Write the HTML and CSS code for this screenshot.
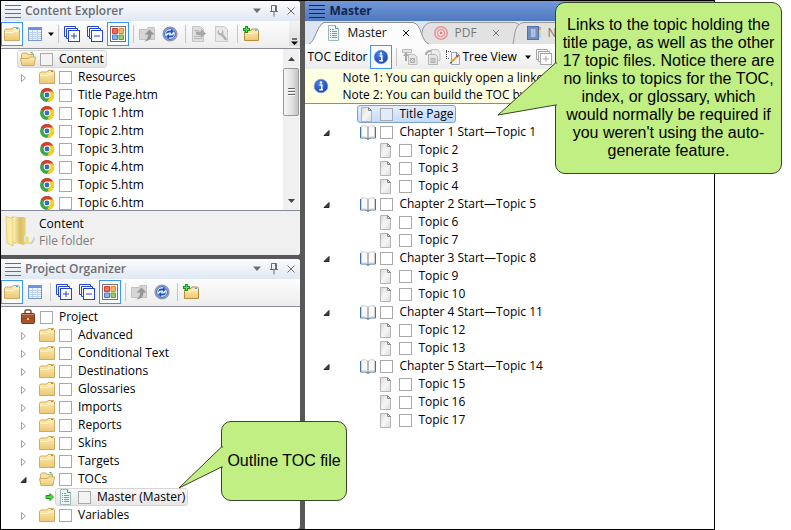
FILE: index.html
```html
<!DOCTYPE html>
<html lang="en">
<head>
<meta charset="utf-8">
<title>Master</title>
<link rel="stylesheet" href="styles.css">
</head>
<body>
<svg class="sprite" aria-hidden="true">
  <defs>
    <linearGradient id="g-folder" x1="0" y1="0" x2="0" y2="1"><stop offset="0" stop-color="#fdeeb4"/><stop offset="1" stop-color="#ecc875"/></linearGradient>
    <linearGradient id="g-page" x1="0" y1="0" x2="1" y2="1"><stop offset="0" stop-color="#d9d9d9"/><stop offset=".5" stop-color="#f6f6f6"/><stop offset="1" stop-color="#dcdcdc"/></linearGradient>
    <linearGradient id="g-big" x1="0" y1="0" x2="1" y2="0"><stop offset="0" stop-color="#f9edb0"/><stop offset=".4" stop-color="#d9bd62"/><stop offset="1" stop-color="#f5e486"/></linearGradient>
    <radialGradient id="g-info" cx=".4" cy=".3" r=".8"><stop offset="0" stop-color="#4f83ea"/><stop offset="1" stop-color="#1238a8"/></radialGradient>
  </defs>
  <symbol id="folder" viewBox="0 0 16 16">
    <path d="M.5 4.500 1.500 3H8l1-1.500h5.500l1 1.500V14.500H.5z" fill="url(#g-folder)" stroke="#d0aa60"/>
    <path d="M1 6.500h8l1-1.500h5" fill="none" stroke="#fff6d2"/>
    <path d="M10 2.500h3" stroke="#fff"/><path d="M12 2.500h2" stroke="#35a7e0"/>
  </symbol>
  <symbol id="folder-open" viewBox="0 0 16 16">
    <path d="M1.500 13V3.500L2.500 2H7l1 1.500h5.500V7" fill="#f7e2a0" stroke="#d0aa60"/>
    <path d="M.5 7.500h8l1-1.500h6l-1.500 8.500h-12z" fill="url(#g-folder)" stroke="#d0aa60"/>
    <path d="M8.500 2h4" stroke="#fff"/><path d="M10.500 1.500h2" stroke="#2bb54a"/><path d="M11.500 3h2" stroke="#35a7e0"/>
  </symbol>
  <symbol id="folder-add" viewBox="0 0 16 16">
    <path d="M1.500 6 3 4.500h5L9 3h5.500l1 1.500v10h-14z" fill="url(#g-folder)" stroke="#b98c3c"/>
    <path d="M2 7.500h7l1-1.500h5" fill="none" stroke="#fff6d2"/><path d="M12 4.500h2" stroke="#35a7e0"/>
    <path d="M3.500 0v7M0 3.500h7" stroke="#109a24" stroke-width="3"/><path d="M3.500 1v5M1 3.500h5" stroke="#5fe065"/>
  </symbol>
  <symbol id="chrome" viewBox="0 0 16 16">
    <circle cx="8" cy="8" r="7" fill="#3aa648"/>
    <path d="M8 8 1.900 4.500A7 7 0 0 1 14.100 4.500z" fill="#dc3a2d"/>
    <path d="M8 4.500h6.100A7 7 0 0 1 8 15L11 9.500z" fill="#f9cf1c"/>
    <circle cx="8" cy="8" r="3.400" fill="#fff"/><circle cx="8" cy="8" r="2.400" fill="#2f6fc4"/>
  </symbol>
  <symbol id="page" viewBox="0 0 16 16">
    <path d="M1.500 1.500h7l3 3v11h-10z" fill="url(#g-page)" stroke="#b4b4b4"/><path d="M8.500 1.500v3h3z" fill="#f4f4f4" stroke="#858585"/>
  </symbol>
  <symbol id="toc" viewBox="0 0 16 16">
    <path d="M2.500.500h7l3 3v12h-10z" fill="#edf6f6" stroke="#9db8b8"/><path d="M9.500.500v3h3" fill="#fff" stroke="#6f8c8c"/>
    <path d="M4 4.500h1m1 0h2M4 6.500h1m1 0h5M4 8.500h1m1 0h5M4 10.500h1m1 0h5M4 12.500h1m1 0h5" stroke="#7d9c9c"/>
  </symbol>
  <symbol id="book" viewBox="0 0 16 16">
    <path d="M.5 3v11h6M15.500 3v11h-6" fill="none" stroke="#3f73ad"/>
    <path d="M1.500 2q4.500-1 6.500 1v11q-2-1.500-6.500-1zM14.500 2q-4.500-1-6.500 1v11q2-1.500 6.500-1z" fill="#fafafa" stroke="#cfcfcf"/>
    <path d="M8 3v11" stroke="#9a9a9a"/><path d="M6.500 14.500 8 15.200l1.500-.700" fill="none" stroke="#333"/>
  </symbol>
  <symbol id="briefcase" viewBox="0 0 16 16">
    <path d="M5 4V2.500Q5 1 6.500 1h3Q11 1 11 2.500V4" fill="none" stroke="#7b4a35" stroke-width="1.500"/>
    <rect x="1.500" y="4.500" width="13" height="10" rx="1" fill="#a5562c" stroke="#793719"/>
    <path d="M2 5.500h12" stroke="#c9805a"/><path d="M2 9.500h12" stroke="#8a4420"/><rect x="7" y="9" width="2" height="2" fill="#e7c27c"/>
  </symbol>
  <symbol id="table" viewBox="0 0 16 16">
    <rect x="1.500" y="1.500" width="13" height="13" fill="#f2f7ff" stroke="#7396d8"/><path d="M2 3h12" stroke="#6a92e0" stroke-width="2"/>
    <path d="M2 6.500h12M2 8.500h12M2 10.500h12M2 12.500h12M5.500 4v10M10.500 4v10" stroke="#bdd0f2"/>
  </symbol>
  <symbol id="expand" viewBox="0 0 16 16">
    <path d="M11.500 2V.500H.5v10H2M13.500 4V2.500h-11v10H4" fill="none" stroke="currentColor"/>
    <rect x="4.500" y="4.500" width="11" height="11" fill="#fff" stroke="currentColor"/><path d="M7 10h6M10 7v6" stroke="currentColor"/>
  </symbol>
  <symbol id="collapse" viewBox="0 0 16 16">
    <path d="M11.500 2V.500H.5v10H2M13.500 4V2.500h-11v10H4" fill="none" stroke="currentColor"/>
    <rect x="4.500" y="4.500" width="11" height="11" fill="#fff" stroke="currentColor"/><path d="M7 10h6" stroke="currentColor"/>
  </symbol>
  <symbol id="squares" viewBox="0 0 16 16">
    <rect x=".5" y=".5" width="15" height="15" fill="#fff" stroke="#77716c"/>
    <path d="M2.500 2.500h5v5h-5z" fill="#ef6a5c" stroke="#d93a31"/><path d="M9 2.500h4.500v5H9z" fill="#f8b45e" stroke="#e4872a"/>
    <path d="M2.500 9h5v4.500h-5z" fill="#87b2f0" stroke="#4a79cb"/><path d="M9 9h4.500v4.500H9z" fill="#9ace62" stroke="#619f33"/>
  </symbol>
  <symbol id="upload" viewBox="0 0 16 16">
    <path d="M.5 3.500H8l1-2h6.500v12H.5z" fill="#d6d6d6" stroke="#c2c2c2"/>
    <path d="M4 15.500q5-1 5-7H5.500L10.500 3.500l5 5H12.500q0 7-8.500 7z" fill="#969696"/>
  </symbol>
  <symbol id="refresh" viewBox="0 0 16 16">
    <circle cx="8" cy="8" r="6.800" fill="#c5d7f8" stroke="#8e98ae" stroke-width="1.600"/><circle cx="8" cy="8" r="5.400" fill="#dfeaff" stroke="#3462c8"/>
    <path d="M4 8q0-3.500 4-3.500h1V3l3 2.500L9 8V6.500H7Q5 6.500 4 8zM12 8q0 3.500-4 3.500H7V13l-3-2.500L7 8v1.500h2q2 0 3-1.500z" fill="#2152bf"/>
  </symbol>
  <symbol id="page-arrow" viewBox="0 0 16 16">
    <path d="M1.500.500h8l3 3v12h-11z" fill="#dedede" stroke="#c4c4c4"/><path d="M3 4.500h5M3 10.500h7M3 12.500h8" stroke="#bbb"/><path d="M5 5.500h5V3l5 4.500-5 4.500V9.500q-3 0-5-1z" fill="#a8a8a8"/>
  </symbol>
  <symbol id="page-wrench" viewBox="0 0 16 16">
    <path d="M1.500.500h9l3 3v12h-12z" fill="#e8e8e8" stroke="#cacaca"/><path d="m7.500 8 4 5" stroke="#b0b0b0" stroke-width="2.500" stroke-linecap="round"/><path d="M5 4v2.500l1.500 1 1.500-1V4q2 1 1.500 3T7 9.500 3.800 7.500 5 4z" fill="#b4b4b4"/>
  </symbol>
  <symbol id="info" viewBox="0 0 16 16">
    <circle cx="8" cy="8" r="6.800" fill="url(#g-info)" stroke="#7494d8" stroke-width=".6"/><circle cx="8" cy="4.500" r="1.200" fill="#fff"/><path d="M6.500 7h2.300v4.500M6.200 11.800h3.900" stroke="#fff" stroke-width="1.500" fill="none"/>
  </symbol>
  <symbol id="pages-up" viewBox="0 0 16 16">
    <path d="M.5.500h9v3h-9zM6.500 5.500h6l2.500 2.500v7.500H6.500z" fill="#e6e6e6" stroke="#bcbcbc"/><path d="M3 12V7H1l3-4 3 4H5v5z" fill="#a8a8a8"/><path d="M8.500 9.500h4v4h-4zm0 0 4 4m0-4-4 4" fill="none" stroke="#b0b0b0"/>
  </symbol>
  <symbol id="pages-two" viewBox="0 0 16 16">
    <path d="M6.500.500h6l2.500 3v8H6.500z" fill="#ececec" stroke="#c0c0c0"/><path d="M3.500 5.500h7l2 2v8h-9z" fill="#e6e6e6" stroke="#b4b4b4"/><path d="M1 6q0-4 5-4" fill="none" stroke="#a8a8a8" stroke-width="2"/><path d="M6 9.500h4v4H6zm0 0 4 4m0-4-4 4" fill="none" stroke="#b0b0b0"/>
  </symbol>
  <symbol id="tree-edit" viewBox="0 0 16 16">
    <path d="M1.500 1v10M1 2.500h5M1 9.500h4" fill="none" stroke="#555" stroke-dasharray="1 1"/><path d="M6.500 3.500h5l3 3v9h-8z" fill="#f2f6fa" stroke="#9aa7b4"/><path d="M11.500 3.500v3h3" fill="none" stroke="#7d8c9b"/>
    <path d="m6.500 13 5-5" stroke="#e4a323" stroke-width="2"/><path d="m11.500 8 1.500-1.500" stroke="#cf3131" stroke-width="2"/><path d="m4.500 15 1.500-2.500 1 1z" fill="#333"/>
  </symbol>
  <symbol id="target" viewBox="0 0 16 16">
    <circle cx="8" cy="8" r="6.200" fill="#f6dcdc" stroke="#e29a9a" stroke-width="1.600"/><circle cx="8" cy="8" r="3.500" fill="#fbeeee" stroke="#e29a9a" stroke-width="1.500"/><circle cx="8" cy="8" r="1.400" fill="#dd7f7f"/>
  </symbol>
  <symbol id="notebook" viewBox="0 0 16 16">
    <path d="M12 2h3v3h-3z" fill="#ef9b94"/><path d="M12 5h3v4h-3z" fill="#f3cf7b"/><path d="M12 9h3v4h-3z" fill="#a8d6ed"/>
    <rect x="1.500" y="1.500" width="11" height="13" fill="#6f8fc4" stroke="#56719f"/><rect x="4.500" y="3.500" width="5.500" height="9" fill="#aebfdf" stroke="#7d93bf"/>
  </symbol>
  <symbol id="bars" viewBox="0 0 16 16"><path d="M0 2.500h16M0 6.500h16M0 10.500h16M0 14.500h16" stroke="currentColor"/></symbol>
  <symbol id="caret" viewBox="0 0 7 16"><path d="M1 6.500h6L4 10z" fill="currentColor"/></symbol>
  <symbol id="down" viewBox="0 0 16 16"><path d="M4 5.500h8L8 10z" fill="currentColor"/></symbol>
  <symbol id="pin" viewBox="0 0 16 16"><path d="M5.500 8.500v-6h5v6M4 8.500h8M8 9v4.500" fill="none" stroke="currentColor"/><path d="M9.500 3v5" stroke="currentColor"/></symbol>
  <symbol id="close" viewBox="0 0 16 16"><path d="m4.500 4.500 7 7m0-7-7 7" stroke="currentColor" fill="none"/></symbol>
  <symbol id="close-small" viewBox="0 0 16 16"><path d="m5 5 6 6m0-6-6 6" stroke="currentColor" fill="none"/></symbol>
  <symbol id="more" viewBox="0 0 8 8"><path d="M1 1h5" stroke="#000"/><path d="M0 3.500h7L3.500 7z" fill="#000"/></symbol>
  <symbol id="closed" viewBox="0 0 8 10"><path d="M1.500 1.500v7l4-3.500z" fill="#fff" stroke="#a0a0a0"/></symbol>
  <symbol id="opened" viewBox="0 0 8 10"><path d="M6 2.500v5H1z" fill="#404040" stroke="#262626"/></symbol>
  <symbol id="go" viewBox="0 0 10 10"><path d="M1 3.500h4V1.500L8.500 5 5 8.500V6.500H1z" fill="#4cdc3d" stroke="#1c9420"/></symbol>
  <symbol id="folder-big" viewBox="0 0 32 32">
    <path d="M20 29q8-1 9-8 3 3-2 8z" fill="#d0d0d0"/><path d="M7 2 20 3v24L9 28z" fill="#f3df92" stroke="#dcc475"/><path d="M7 3h6v24H8z" fill="#fffbe6"/>
    <path d="M9 2h11v19q4 0 4 3v4l-6 2-9-3z" fill="url(#g-big)"/><path d="M1 1.500 8 4v27l-6-3z" fill="#fbeaa6" stroke="#e5cd7c"/><path d="M19 27v-7q2-1 2 1v6z" fill="#c5e8f5"/>
  </symbol>
</svg>

<main class="stage">
  <div class="app">
    <div class="sidebar">
      <section class="panel explorer">
        <header class="titlebar">
          <svg class="icon"><use href="#bars"/></svg><h2>Content Explorer</h2>
          <button aria-label="Menu"><svg class="icon"><use href="#down"/></svg></button>
          <button aria-label="Pin"><svg class="icon"><use href="#pin"/></svg></button>
          <button aria-label="Close"><svg class="icon"><use href="#close"/></svg></button>
        </header>
        <div class="toolbar">
          <button class="tool on" aria-label="Folders"><svg class="icon"><use href="#folder"/></svg></button>
          <button class="tool" aria-label="Columns"><svg class="icon"><use href="#table"/></svg></button>
          <button class="drop" aria-label="Column options"><svg><use href="#caret"/></svg></button>
          <span class="sep"></span>
          <button class="tool blue" aria-label="Expand all"><svg class="icon"><use href="#expand"/></svg></button>
          <button class="tool blue" aria-label="Collapse all"><svg class="icon"><use href="#collapse"/></svg></button>
          <button class="tool on" aria-label="Show tags"><svg class="icon"><use href="#squares"/></svg></button>
          <span class="sep"></span>
          <button class="tool" aria-label="Up"><svg class="icon"><use href="#upload"/></svg></button>
          <button class="tool" aria-label="Refresh"><svg class="icon"><use href="#refresh"/></svg></button>
          <span class="sep"></span>
          <button class="tool" aria-label="Open"><svg class="icon"><use href="#page-arrow"/></svg></button>
          <button class="tool" aria-label="Properties"><svg class="icon"><use href="#page-wrench"/></svg></button>
          <span class="sep"></span>
          <button class="tool" aria-label="New folder"><svg class="icon"><use href="#folder-add"/></svg></button>
          <button class="overflow" aria-label="More tools"><svg><use href="#more"/></svg></button>
        </div>
        <div class="scroller">
          <ul class="tree">
            <li><div class="row"><i></i><label class="node marked"><svg class="icon"><use href="#folder-open"/></svg><input type="checkbox">Content</label></div>
              <ul>
                <li><div class="row"><i><svg><use href="#closed"/></svg></i><label class="node"><svg class="icon"><use href="#folder"/></svg><input type="checkbox">Resources</label></div></li>
                <li><div class="row"><i></i><label class="node"><svg class="icon"><use href="#chrome"/></svg><input type="checkbox">Title Page.htm</label></div></li>
                <li><div class="row"><i></i><label class="node"><svg class="icon"><use href="#chrome"/></svg><input type="checkbox">Topic 1.htm</label></div></li>
                <li><div class="row"><i></i><label class="node"><svg class="icon"><use href="#chrome"/></svg><input type="checkbox">Topic 2.htm</label></div></li>
                <li><div class="row"><i></i><label class="node"><svg class="icon"><use href="#chrome"/></svg><input type="checkbox">Topic 3.htm</label></div></li>
                <li><div class="row"><i></i><label class="node"><svg class="icon"><use href="#chrome"/></svg><input type="checkbox">Topic 4.htm</label></div></li>
                <li><div class="row"><i></i><label class="node"><svg class="icon"><use href="#chrome"/></svg><input type="checkbox">Topic 5.htm</label></div></li>
                <li><div class="row"><i></i><label class="node"><svg class="icon"><use href="#chrome"/></svg><input type="checkbox">Topic 6.htm</label></div></li>
              </ul>
            </li>
          </ul>
          <div class="scrollbar">
            <button class="arrow" aria-label="Scroll up"><svg viewBox="0 0 7 4"><path d="M0 4h7L3.500 0z" fill="#444"/></svg></button>
            <span class="thumb"><svg viewBox="0 0 7 9"><path d="M0 .500h7M0 3.500h7M0 6.500h7" stroke="#666"/><path d="M0 1.500h7M0 4.500h7M0 7.500h7" stroke="#fff"/></svg></span>
            <button class="arrow last" aria-label="Scroll down"><svg viewBox="0 0 7 4"><path d="M0 0h7L3.500 4z" fill="#444"/></svg></button>
          </div>
        </div>
        <footer class="details">
          <svg><use href="#folder-big"/></svg>
          <div><p>Content</p><p class="muted">File folder</p></div>
        </footer>
      </section>

      <section class="panel organizer">
        <header class="titlebar">
          <svg class="icon"><use href="#bars"/></svg><h2>Project Organizer</h2>
          <button aria-label="Menu"><svg class="icon"><use href="#down"/></svg></button>
          <button aria-label="Pin"><svg class="icon"><use href="#pin"/></svg></button>
          <button aria-label="Close"><svg class="icon"><use href="#close"/></svg></button>
        </header>
        <div class="toolbar">
          <button class="tool on" aria-label="Folders"><svg class="icon"><use href="#folder"/></svg></button>
          <button class="tool" aria-label="Columns"><svg class="icon"><use href="#table"/></svg></button>
          <span class="sep"></span>
          <button class="tool blue" aria-label="Expand all"><svg class="icon"><use href="#expand"/></svg></button>
          <button class="tool blue" aria-label="Collapse all"><svg class="icon"><use href="#collapse"/></svg></button>
          <button class="tool on" aria-label="Show tags"><svg class="icon"><use href="#squares"/></svg></button>
          <span class="sep"></span>
          <button class="tool" aria-label="Up"><svg class="icon"><use href="#upload"/></svg></button>
          <button class="tool" aria-label="Refresh"><svg class="icon"><use href="#refresh"/></svg></button>
          <span class="sep"></span>
          <button class="tool" aria-label="New folder"><svg class="icon"><use href="#folder-add"/></svg></button>
        </div>
        <ul class="tree">
          <li><div class="row"><i></i><label class="node"><svg class="icon"><use href="#briefcase"/></svg><input type="checkbox">Project</label></div>
            <ul>
              <li><div class="row"><i><svg><use href="#closed"/></svg></i><label class="node"><svg class="icon"><use href="#folder"/></svg><input type="checkbox">Advanced</label></div></li>
              <li><div class="row"><i><svg><use href="#closed"/></svg></i><label class="node"><svg class="icon"><use href="#folder"/></svg><input type="checkbox">Conditional Text</label></div></li>
              <li><div class="row"><i><svg><use href="#closed"/></svg></i><label class="node"><svg class="icon"><use href="#folder"/></svg><input type="checkbox">Destinations</label></div></li>
              <li><div class="row"><i><svg><use href="#closed"/></svg></i><label class="node"><svg class="icon"><use href="#folder"/></svg><input type="checkbox">Glossaries</label></div></li>
              <li><div class="row"><i><svg><use href="#closed"/></svg></i><label class="node"><svg class="icon"><use href="#folder"/></svg><input type="checkbox">Imports</label></div></li>
              <li><div class="row"><i><svg><use href="#closed"/></svg></i><label class="node"><svg class="icon"><use href="#folder"/></svg><input type="checkbox">Reports</label></div></li>
              <li><div class="row"><i><svg><use href="#closed"/></svg></i><label class="node"><svg class="icon"><use href="#folder"/></svg><input type="checkbox">Skins</label></div></li>
              <li><div class="row"><i><svg><use href="#closed"/></svg></i><label class="node"><svg class="icon"><use href="#folder"/></svg><input type="checkbox">Targets</label></div></li>
              <li><div class="row"><i><svg><use href="#opened"/></svg></i><label class="node"><svg class="icon"><use href="#folder-open"/></svg><input type="checkbox">TOCs</label></div>
                <ul>
                  <li><div class="row"><i class="go"><svg><use href="#go"/></svg></i><label class="node marked"><svg class="icon"><use href="#toc"/></svg><input type="checkbox">Master (Master)</label></div></li>
                </ul>
              </li>
              <li><div class="row"><i><svg><use href="#closed"/></svg></i><label class="node"><svg class="icon"><use href="#folder"/></svg><input type="checkbox">Variables</label></div></li>
            </ul>
          </li>
        </ul>
      </section>
    </div>

    <section class="editor">
      <header class="titlebar"><svg class="icon"><use href="#bars"/></svg><h1>Master</h1></header>
      <nav class="tabs">
        <div class="tab active">
          <svg class="shape" viewBox="0 0 120 22" preserveAspectRatio="none"><path d="M0 22C6 20 8 3 15 .500H104C113 2 112 20 120 22" fill="#fcfcfc" stroke="#8e8e8e"/></svg>
          <svg class="icon"><use href="#toc"/></svg><a href="#master">Master</a><button aria-label="Close Master"><svg class="icon"><use href="#close-small"/></svg></button>
        </div>
        <div class="tab">
          <svg class="shape" viewBox="0 0 120 22" preserveAspectRatio="none"><path d="M9 22 11 10Q13 1 20 .500H104C113 2 112 20 120 22" fill="#e2e2e2" stroke="#9a9a9a"/></svg>
          <svg class="icon"><use href="#target"/></svg><a href="#pdf">PDF</a><button aria-label="Close PDF"><svg class="icon"><use href="#close-small"/></svg></button>
        </div>
        <div class="tab">
          <svg class="shape" viewBox="0 0 120 22" preserveAspectRatio="none"><path d="M9 22 11 10Q13 1 20 .500H104C113 2 112 20 120 22" fill="#e2e2e2" stroke="#9a9a9a"/></svg>
          <svg class="icon"><use href="#notebook"/></svg><a href="#n">N</a>
        </div>
      </nav>
      <div class="toolbar">
        <span class="caption">TOC Editor</span>
        <button class="tool on" aria-label="Show notes"><svg class="icon"><use href="#info"/></svg></button>
        <span class="sep"></span>
        <button class="tool" aria-label="Link up"><svg class="icon"><use href="#pages-up"/></svg></button>
        <button class="tool" aria-label="Merge"><svg class="icon"><use href="#pages-two"/></svg></button>
        <button class="view"><svg class="icon"><use href="#tree-edit"/></svg>Tree View<svg class="tick"><use href="#caret"/></svg></button>
        <button class="tool gray" aria-label="Expand all"><svg class="icon"><use href="#expand"/></svg></button>
      </div>
      <div class="notes">
        <svg class="icon"><use href="#info"/></svg>
        <div><p>Note 1: You can quickly open a linked</p><p>Note 2: You can build the TOC by</p></div>
      </div>
      <ul class="tree">
        <li><div class="row"><i></i><label class="node chosen"><svg class="icon"><use href="#page"/></svg><input type="checkbox">Title Page</label></div></li>
        <li><div class="row"><i><svg><use href="#opened"/></svg></i><label class="node"><svg class="icon"><use href="#book"/></svg><input type="checkbox">Chapter 1 Start—Topic 1</label></div>
          <ul>
            <li><div class="row"><i></i><label class="node"><svg class="icon"><use href="#page"/></svg><input type="checkbox">Topic 2</label></div></li>
            <li><div class="row"><i></i><label class="node"><svg class="icon"><use href="#page"/></svg><input type="checkbox">Topic 3</label></div></li>
            <li><div class="row"><i></i><label class="node"><svg class="icon"><use href="#page"/></svg><input type="checkbox">Topic 4</label></div></li>
          </ul>
        </li>
        <li><div class="row"><i><svg><use href="#opened"/></svg></i><label class="node"><svg class="icon"><use href="#book"/></svg><input type="checkbox">Chapter 2 Start—Topic 5</label></div>
          <ul>
            <li><div class="row"><i></i><label class="node"><svg class="icon"><use href="#page"/></svg><input type="checkbox">Topic 6</label></div></li>
            <li><div class="row"><i></i><label class="node"><svg class="icon"><use href="#page"/></svg><input type="checkbox">Topic 7</label></div></li>
          </ul>
        </li>
        <li><div class="row"><i><svg><use href="#opened"/></svg></i><label class="node"><svg class="icon"><use href="#book"/></svg><input type="checkbox">Chapter 3 Start—Topic 8</label></div>
          <ul>
            <li><div class="row"><i></i><label class="node"><svg class="icon"><use href="#page"/></svg><input type="checkbox">Topic 9</label></div></li>
            <li><div class="row"><i></i><label class="node"><svg class="icon"><use href="#page"/></svg><input type="checkbox">Topic 10</label></div></li>
          </ul>
        </li>
        <li><div class="row"><i><svg><use href="#opened"/></svg></i><label class="node"><svg class="icon"><use href="#book"/></svg><input type="checkbox">Chapter 4 Start—Topic 11</label></div>
          <ul>
            <li><div class="row"><i></i><label class="node"><svg class="icon"><use href="#page"/></svg><input type="checkbox">Topic 12</label></div></li>
            <li><div class="row"><i></i><label class="node"><svg class="icon"><use href="#page"/></svg><input type="checkbox">Topic 13</label></div></li>
          </ul>
        </li>
        <li><div class="row"><i><svg><use href="#opened"/></svg></i><label class="node"><svg class="icon"><use href="#book"/></svg><input type="checkbox">Chapter 5 Start—Topic 14</label></div>
          <ul>
            <li><div class="row"><i></i><label class="node"><svg class="icon"><use href="#page"/></svg><input type="checkbox">Topic 15</label></div></li>
            <li><div class="row"><i></i><label class="node"><svg class="icon"><use href="#page"/></svg><input type="checkbox">Topic 16</label></div></li>
            <li><div class="row"><i></i><label class="node"><svg class="icon"><use href="#page"/></svg><input type="checkbox">Topic 17</label></div></li>
          </ul>
        </li>
      </ul>
    </section>
  </div>

  <aside class="callout links">
    <svg viewBox="0 0 60 54"><path d="M60 1 58.500 1 1 53 58.500 43H60" /></svg>
    <p>Links to the topic holding the title page, as well as the other 17 topic files. Notice there are no links to topics for the TOC, index, or glossary, which would normally be required if you weren't using the auto-generate feature.</p>
  </aside>
  <aside class="callout outline">
    <svg viewBox="0 0 45 43"><path d="M45 1 43.500 1 1 42 43.500 21H45"/></svg>
    <p>Outline TOC file</p>
  </aside>
</main>
</body>
</html>
```
FILE: styles.css
```css
* { box-sizing: border-box; }
body { margin: 0; background: #fff; color: #000; font: 12px/18px "Open Sans", "Noto Sans", sans-serif; }
h1, h2, p, ul { margin: 0; padding: 0; font-size: inherit; }
ul { list-style: none; }
button { margin: 0; padding: 0; border: 0; background: none; color: inherit; font: inherit; }
a { color: inherit; text-decoration: none; }
svg { display: block; flex: none; }
.sprite { position: absolute; width: 0; height: 0; }
.icon { width: 16px; height: 16px; }

.stage { position: relative; min-height: 100vh; padding-right: 76px; display: flex; }
.app { flex: 1; min-width: 0; display: flex; border: 1px solid #000; background: #585858; gap: 5px; }
.sidebar { flex: 0 0 42%; display: flex; flex-direction: column; gap: 4px; }
.panel { display: flex; flex-direction: column; background: #fff; border-radius: 0 3px 3px 0; overflow: hidden; }
.organizer { flex: 1; }

.titlebar { display: flex; align-items: center; height: 20px; padding: 0 1px 0 4px; gap: 1px; color: #6e6e6e; background: linear-gradient(#fbfcfe, #e0e8f3); }
.titlebar h1, .titlebar h2 { flex: 1; margin-left: 3px; font-weight: 700; font-size: 12px; }
.titlebar h2 { font-weight: 600; color: #6c6e70; }

.toolbar { display: flex; align-items: center; gap: 1px; height: 28px; padding-bottom: 2px; border-bottom: 1px solid #8a8d95; background: linear-gradient(#fdfdfd, #ededed); }
.tool { flex: none; display: grid; place-items: center; width: 22px; height: 24px; border: 1px solid transparent; }
.tool.on { border-color: #3c97f0; background: #f8fbff; }
.blue { color: #2446cf; }
.gray { color: #a6a6a6; }
.sep { width: 1px; height: 18px; margin: 0 1px 0 3px; background: #c6c6c6; }
.drop { width: 7px; height: 16px; }
.drop svg, .tick { width: 7px; height: 16px; }
.overflow { display: grid; place-items: end center; align-self: stretch; width: 11px; margin-left: auto; background: linear-gradient(#f4f4f4, #dcdcdc); }
.overflow svg { width: 8px; height: 8px; }

.tree { padding-top: 1px; }
.tree ul { padding-left: 19px; }
.row { display: flex; height: 18px; }
.row i { flex: none; display: flex; align-items: center; width: 19px; padding-top: 2px; }
.row i svg { width: 8px; height: 10px; }
.row .go { justify-content: flex-end; padding: 0 3px 0 0; }
.row .go svg { width: 10px; height: 10px; }
.node { display: flex; align-items: center; margin-left: -3px; padding: 0 2px; border: 1px solid transparent; border-radius: 3px; white-space: nowrap; }
.node input { appearance: none; width: 13px; height: 13px; margin: 0 6px 0 4px; border: 1px solid #a8a8a8; background: #fff; }
.marked { border-color: #d6d6d6; background: linear-gradient(#fafafa, #e6e6e6); }
.marked input { background: #f3f3f3; }
.chosen { border-color: #7da2ce; background: linear-gradient(#e4effd, #c2dbfc); }
.chosen input { background: #e0ecfc; }

.scroller { display: flex; height: 161px; }
.scroller .tree { flex: 1; overflow: hidden; }
.scrollbar { display: flex; flex-direction: column; width: 17px; background: #f0f0f0; border-right: 1px solid #fff; }
.arrow, .thumb { display: grid; place-items: center; }
.arrow { height: 19px; }
.arrow.last { margin-top: auto; }
.arrow svg { width: 7px; height: 4px; }
.thumb { height: 48px; border: 1px solid #999; border-radius: 2px; background: linear-gradient(90deg, #f6f6f6, #e4e4e4 50%, #c4c4c8); }
.thumb svg { width: 7px; height: 9px; }

.details { display: flex; height: 45px; padding: 4px; gap: 2px; border-top: 1px solid #8289a0; background: #f0f0f0; line-height: 17px; }
.details svg { width: 32px; height: 32px; }
.muted { color: #7c7c7c; }

.editor { flex: 1; min-width: 0; background: #fff; }
.editor .titlebar { color: #0e2650; background: linear-gradient(#7298d8, #4f78c0); }
.tabs { display: flex; height: 23px; padding: 1px 0 0 4px; background: #dce6f3; overflow: hidden; }
.tab { position: relative; flex: none; display: flex; align-items: center; width: 120px; height: 22px; margin-right: -27px; padding-left: 17px; color: #777; }
.tab + .tab { padding-left: 22px; }
.tab.active { z-index: 1; color: #111; margin-right: -18px; }
.tab > * { position: relative; }
.tab .shape { position: absolute; inset: 0; width: 100%; height: 100%; }
.tab a { margin-left: 5px; }
.tab button { margin-left: 11px; }
.editor .toolbar { height: 25px; padding: 0 0 0 2px; border: 0; }
.caption { width: 62px; white-space: nowrap; }
.view { display: flex; align-items: center; gap: 1px; white-space: nowrap; }
.tick { margin: 0 1px 0 6px; }
.notes { display: flex; align-items: center; gap: 13px; height: 35px; padding-left: 8px; border-bottom: 1px solid #8a8d95; background: #ffffe1; line-height: 17px; white-space: nowrap; overflow: hidden; }
.editor > .tree { padding-left: 18px; }
.editor > .tree > li > .row i { width: 37px; }
.editor > .tree ul { padding-left: 37px; }

.callout { position: absolute; display: grid; place-items: center; border: 1px solid #39452b; border-radius: 10px; background: #c1ef83; font: 16px/18px "Liberation Sans", Arial, sans-serif; text-align: center; }
.callout svg { position: absolute; overflow: visible; fill: #c1ef83; stroke: #39452b; }
.links { top: 2px; right: 9px; width: 227px; height: 172px; padding: 0 5px; }
.links svg { left: -59px; top: 59px; width: 60px; height: 54px; }
.outline { top: 421px; left: 221px; width: 126px; height: 80px; }
.outline svg { left: -44px; top: 24px; width: 45px; height: 43px; }
```
